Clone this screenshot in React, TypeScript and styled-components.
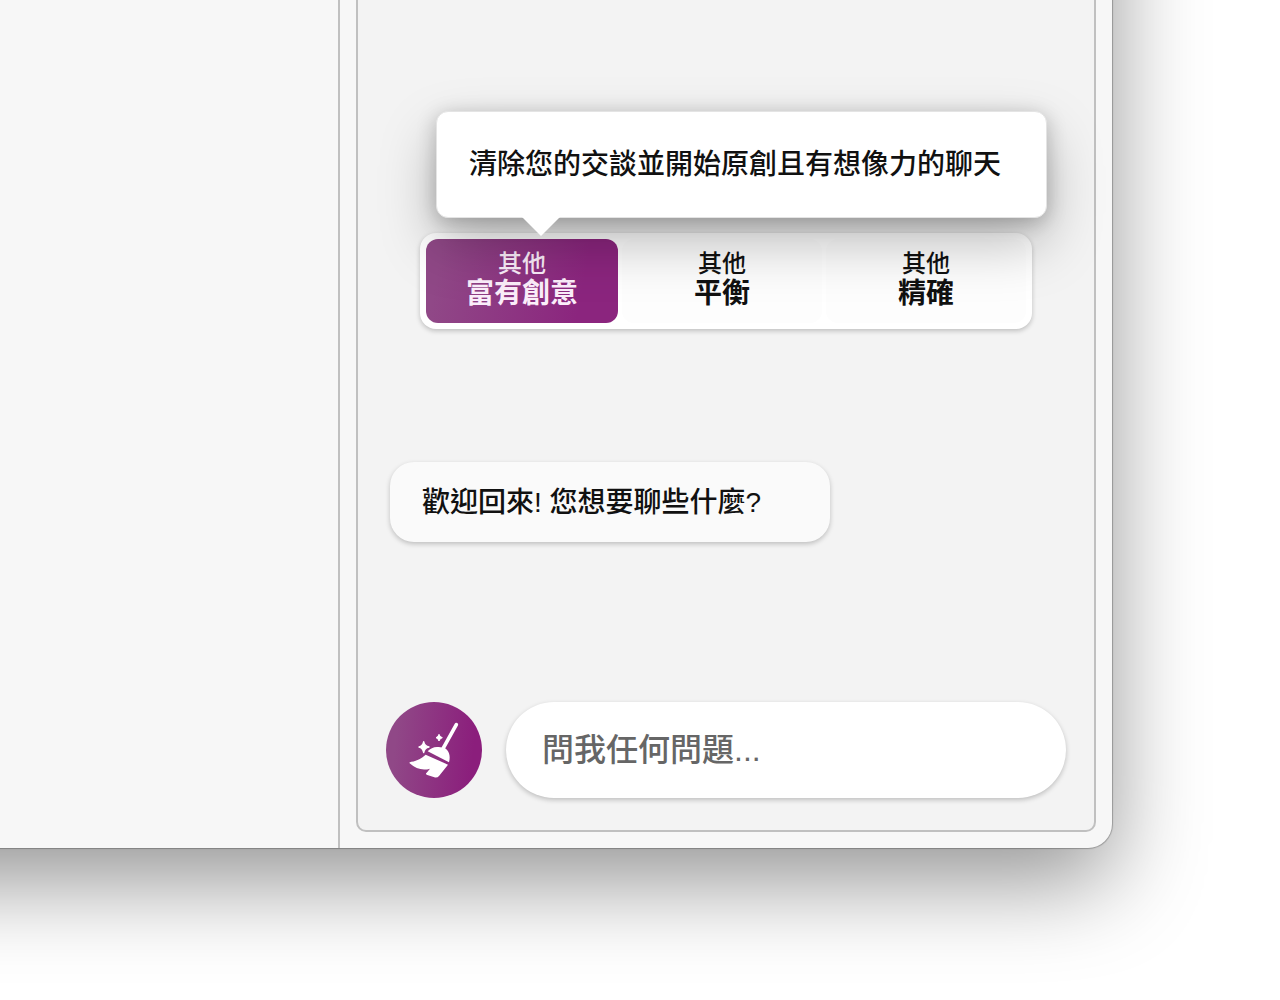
import React, { useState } from "react";
import styled, { createGlobalStyle } from "styled-components";

const GlobalStyle = createGlobalStyle`
  *, *::before, *::after { box-sizing: border-box; }
  body {
    margin: 0;
    background: #fff;
    color: #111;
    font-family: "Liberation Sans", "Noto Sans CJK TC", sans-serif;
  }
  button, input { font: inherit; }
`;

const Desktop = styled.div`
  display: flex;
  min-height: 100vh;
  overflow: hidden;
`;

const AppWindow = styled.div`
  flex: 1;
  display: grid;
  grid-template-columns: 1fr minmax(0, 774px);
  margin: -200px 168px 152px -200px;
  background: #f7f7f7;
  border-radius: 0 0 24px 0;
  box-shadow:
    0 0 1px 1px rgba(0, 0, 0, 0.26),
    0 34px 92px rgba(0, 0, 0, 0.42);
`;

const PageArea = styled.main`
  background: #f7f7f7;
`;

const Sidebar = styled.aside`
  display: flex;
  padding: 0 16px 16px;
  border-left: 2px solid #c0c0c0;
`;

const ChatPanel = styled.section`
  flex: 1;
  display: flex;
  flex-direction: column;
  justify-content: flex-end;
  padding: 32px 28px;
  background: #f3f3f3;
  border: 2px solid #c0c0c0;
  border-radius: 0 0 10px 10px;
`;

const ToneSelector = styled.div`
  position: relative;
  align-self: center;
  display: grid;
  grid-template-columns: 192px 200px 200px;
  gap: 4px;
  padding: 6px;
  margin-bottom: 133px;
  background: #fff;
  border-radius: 16px;
  box-shadow: 0 2px 5px rgba(0, 0, 0, 0.22);
`;

const ToneButton = styled.button<{ $active: boolean }>`
  display: flex;
  flex-direction: column;
  align-items: center;
  justify-content: center;
  height: 84px;
  padding: 0 0 2px;
  border: 0;
  border-radius: 12px;
  cursor: pointer;
  color: ${(p) => (p.$active ? "#fbeefa" : "#111")};
  background: ${(p) =>
    p.$active ? "linear-gradient(100deg, #904887 8%, #8b257e 80%)" : "#fdfdfd"};
`;

const ToneCaption = styled.span`
  font-size: 24px;
  line-height: 28px;
  font-weight: 500;
`;

const ToneName = styled.span`
  font-size: 28px;
  line-height: 32px;
  font-weight: 700;
`;

const Tooltip = styled.div`
  position: absolute;
  left: 16px;
  bottom: calc(100% + 15px);
  display: flex;
  align-items: center;
  padding: 35px 45px 34px 32px;
  background: #fff;
  border: 1px solid #e4e4e4;
  border-radius: 12px;
  box-shadow:
    0 25px 56px rgba(0, 0, 0, 0.26),
    0 4px 20px rgba(0, 0, 0, 0.22);
  font-size: 28px;
  line-height: 36px;
  font-weight: 500;
  white-space: nowrap;

  &::after {
    content: "";
    position: absolute;
    top: 100%;
    left: 85px;
    border: 19px solid transparent;
    border-top-color: #fff;
    border-bottom-width: 0;
  }
`;

const Message = styled.p`
  width: 440px;
  max-width: 100%;
  margin: 0 0 160px 4px;
  padding: 23px 32px 21px;
  background: #fafafa;
  border-radius: 24px;
  box-shadow: 0 2px 5px rgba(0, 0, 0, 0.22);
  font-size: 28px;
  line-height: 36px;
  font-weight: 500;
`;

const Composer = styled.form`
  display: flex;
  gap: 24px;
`;

const ClearButton = styled.button`
  flex: none;
  width: 96px;
  height: 96px;
  padding: 0;
  border: 0;
  border-radius: 50%;
  cursor: pointer;
  background: linear-gradient(95deg, #904887 12%, #8b1e7c 88%);

  svg { display: block; }
`;

const PromptInput = styled.input`
  flex: 1;
  min-width: 0;
  height: 96px;
  padding: 0 36px;
  border: 0;
  border-radius: 48px;
  outline: 0;
  background: #fff;
  box-shadow: 0 2px 5px rgba(0, 0, 0, 0.22);
  color: #111;
  font-size: 32px;
  font-weight: 500;

  &::placeholder { color: #666; opacity: 1; }
`;

const BroomIcon = () => (
  <svg width="96" height="96" viewBox="18 36 288 288" fill="#fff" aria-hidden="true">
    <path d="M189 176 229 104" stroke="#fff" strokeWidth="11" strokeLinecap="round" />
    <path d="M143 184C153 173 166 168 181 172L194 174C206 180 213 197 207 217Z" />
    <path d="M137 194 204 224 177 258Q172 264 163 262L142 255Q135 252 140 248L150 236Q118 246 89 220Q86 216 94 215C113 213 125 204 137 194Z" />
    <path d="M131 155Q134 169 147 171Q134 173 131 188Q128 173 117 171Q128 169 131 155Z" stroke="#fff" strokeWidth="4" strokeLinejoin="round" />
    <path d="M177 133Q179 141 187 143Q179 145 177 153Q175 145 168 143Q175 141 177 133Z" stroke="#fff" strokeWidth="3" strokeLinejoin="round" />
  </svg>
);

const tones = ["富有創意", "平衡", "精確"];

export default function App() {
  const [tone, setTone] = useState(0);
  return (
    <>
      <GlobalStyle />
      <Desktop>
        <AppWindow>
          <PageArea />
          <Sidebar>
            <ChatPanel>
              <ToneSelector role="group">
                {tones.map((name, i) => (
                  <ToneButton
                    key={name}
                    type="button"
                    $active={i === tone}
                    aria-pressed={i === tone}
                    aria-describedby={i === 0 ? "tone-tip" : undefined}
                    onClick={() => setTone(i)}
                  >
                    <ToneCaption>其他</ToneCaption>
                    <ToneName>{name}</ToneName>
                  </ToneButton>
                ))}
                <Tooltip role="tooltip" id="tone-tip">
                  清除您的交談並開始原創且有想像力的聊天
                </Tooltip>
              </ToneSelector>
              <Message>歡迎回來! 您想要聊些什麼?</Message>
              <Composer onSubmit={(e) => e.preventDefault()}>
                <ClearButton type="button" aria-label="清除">
                  <BroomIcon />
                </ClearButton>
                <PromptInput type="text" placeholder="問我任何問題..." aria-label="問我任何問題..." />
              </Composer>
            </ChatPanel>
          </Sidebar>
        </AppWindow>
      </Desktop>
    </>
  );
}
